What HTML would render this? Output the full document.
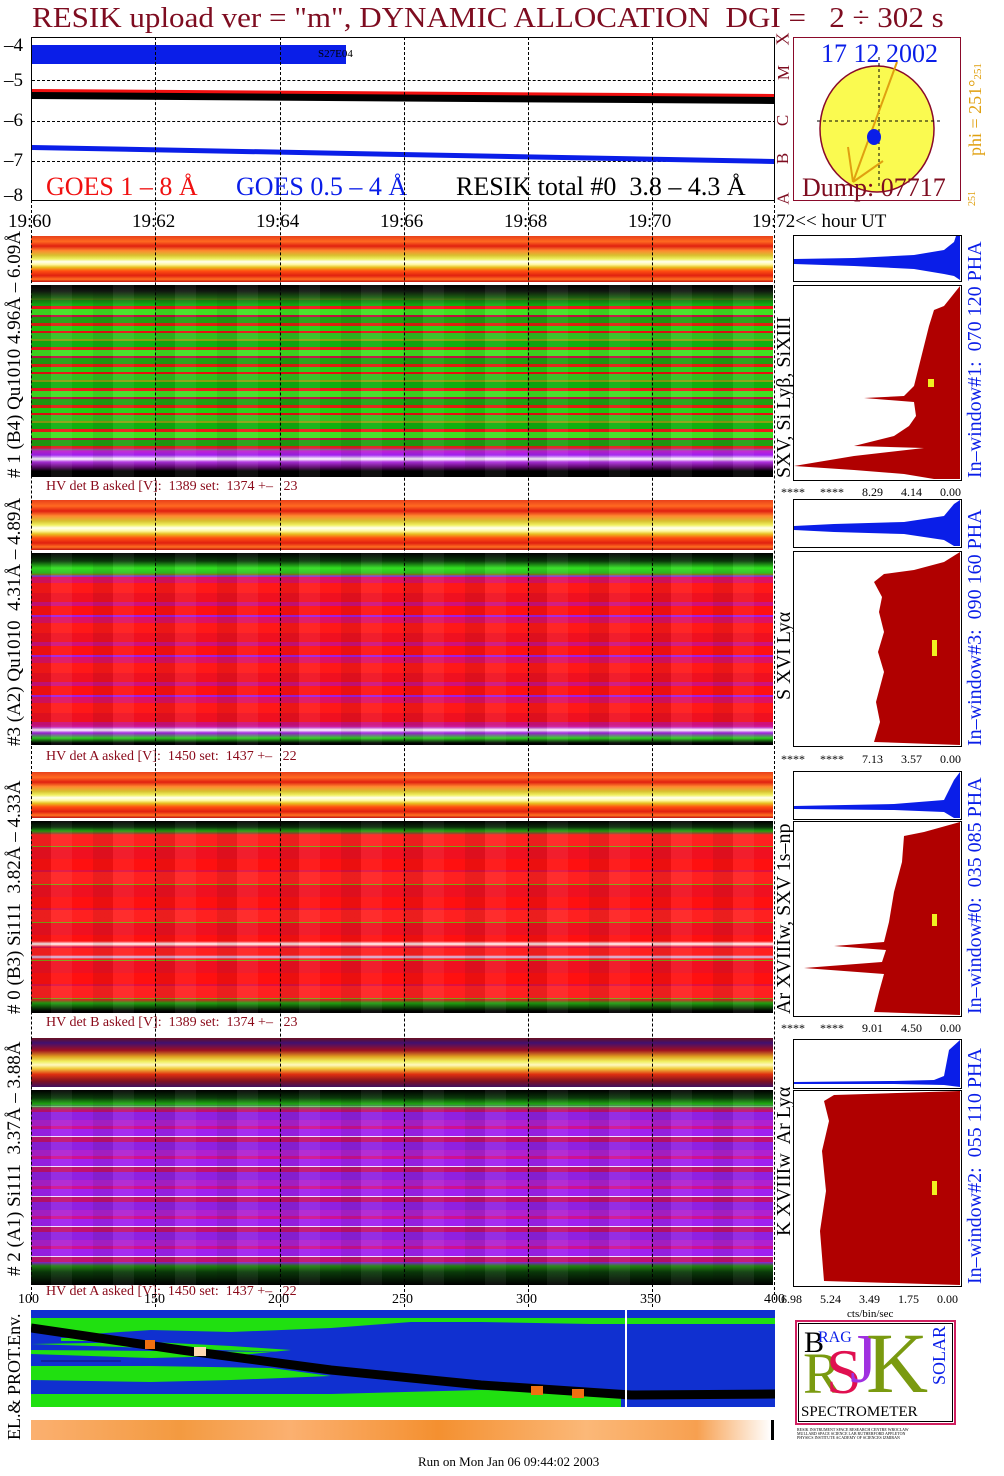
<!DOCTYPE html>
<html><head><meta charset="utf-8"><style>
body{margin:0;background:#fff;width:1004px;height:1476px;position:relative;overflow:hidden;font-family:"Liberation Serif",serif}
.a{position:absolute}
.t{position:absolute;white-space:nowrap;line-height:1}
.dash{position:absolute;width:0;border-left:1px dashed #000}
.strip{background:linear-gradient(180deg,#e8401a 0%,#ff6a20 12%,#e02010 22%,#ff8a30 32%,#d8c030 42%,#f0f060 50%,#fffff0 56%,#fff8a0 62%,#e8c020 68%,#ff5010 76%,#e02010 86%,#ff7020 94%,#c01010 100%)}
.cols{background-image:repeating-linear-gradient(90deg,rgba(0,0,0,.08) 0 20px,rgba(255,255,255,.06) 20px 41px,rgba(0,0,0,0) 41px 62px)}
.rot{position:absolute;white-space:nowrap;transform:rotate(-90deg);transform-origin:left top;line-height:1}
.hv{color:#8a0a1a;font-size:14px}
.box{position:absolute;border:1px solid #000;background:#fff}
.lab{font-size:12px}
</style></head><body>

<div class="t" style="left:32px;top:4px;font-size:29px;color:#7e0c20;transform:scaleX(1.07);transform-origin:left">RESIK upload ver = "m", DYNAMIC ALLOCATION&nbsp; DGI =&nbsp;&nbsp; 2 ÷ 302 s</div>

<!-- top plot -->
<div class="a" style="left:31px;top:37px;width:744px;height:164px;border:1px solid #000;box-sizing:border-box;overflow:hidden">
 <div class="a" style="left:0;top:7px;width:314px;height:19px;background:#0a1ee8"></div>
 <div class="t" style="left:286px;top:11px;font-size:11px">S27E04</div>
 <div class="a" style="left:0;top:42px;width:744px;height:0;border-top:1px dashed #000"></div>
 <div class="a" style="left:0;top:123px;width:744px;height:0;border-top:1px dashed #000"></div>
 <div class="a" style="left:0;top:83px;width:744px;height:0;border-top:1px dashed #000"></div>
 <svg class="a" style="left:0;top:0" width="744" height="164">
  <polygon points="0,51 744,56 744,60 0,55" fill="#f01010"/>
  <polygon points="0,54 744,59 744,66 0,61" fill="#000"/>
  <polygon points="0,107 744,121 744,126 0,112" fill="#0a1ee8"/>
 </svg>
 <div class="t" style="left:14px;top:136px;font-size:26px;color:#f01010">GOES 1 – 8 Å</div>
 <div class="t" style="left:204px;top:136px;font-size:26px;color:#0a1ee8">GOES 0.5 – 4 Å</div>
 <div class="t" style="left:424px;top:136px;font-size:26px;color:#000">RESIK total #0&nbsp; 3.8 – 4.3 Å</div>
</div>
<div class="t" style="left:4px;top:36px;font-size:19px">–4</div>
<div class="t" style="left:4px;top:71px;font-size:19px">–5</div>
<div class="t" style="left:4px;top:111px;font-size:19px">–6</div>
<div class="t" style="left:4px;top:151px;font-size:19px">–7</div>
<div class="t" style="left:4px;top:186px;font-size:19px">–8</div>
<div class="t" style="left:776px;top:30px;font-size:18px;color:#7e0c20;transform:rotate(-90deg)">X</div>
<div class="t" style="left:776px;top:64px;font-size:17px;color:#7e0c20;transform:rotate(-90deg)">M</div>
<div class="t" style="left:777px;top:112px;font-size:17px;color:#7e0c20;transform:rotate(-90deg)">C</div>
<div class="t" style="left:777px;top:150px;font-size:17px;color:#7e0c20;transform:rotate(-90deg)">B</div>
<div class="t" style="left:777px;top:190px;font-size:17px;color:#7e0c20;transform:rotate(-90deg)">A</div>

<!-- sun box -->
<div class="a" style="left:793px;top:37px;width:168px;height:164px;border:1px solid #8a0a2a;box-sizing:border-box"></div>
<svg class="a" style="left:793px;top:37px" width="168" height="164">
 <ellipse cx="84" cy="92" rx="57" ry="63" fill="#fafa50" stroke="#8a0a2a" stroke-width="1.5"/>
 <line x1="24" y1="84" x2="150" y2="84" stroke="#000" stroke-dasharray="3,3"/>
 <line x1="86" y1="20" x2="86" y2="150" stroke="#000" stroke-dasharray="3,3"/>
 <line x1="104" y1="25" x2="60" y2="145" stroke="#e0a010" stroke-width="2"/>
 <line x1="55" y1="110" x2="60" y2="145" stroke="#e0a010" stroke-width="2"/>
 <line x1="90" y1="124" x2="60" y2="145" stroke="#e0a010" stroke-width="2"/>
 <ellipse cx="81" cy="100" rx="7" ry="8" fill="#0a1ee8"/>
</svg>
<div class="t" style="left:821px;top:41px;font-size:26px;color:#0a1ee8">17 12 2002</div>
<div class="t" style="left:802px;top:175px;font-size:26px;color:#7e0c20">Dump: 07717</div>
<div class="rot" style="left:966px;top:156px;font-size:18px;color:#e0a010">phi = 251°<span style="font-size:11px">251</span></div>
<div class="rot" style="left:968px;top:206px;font-size:10px;color:#e0a010">251</div>

<!-- time labels -->
<div class="t" style="left:8px;top:212px;font-size:19px">19:60</div>
<div class="t" style="left:132px;top:212px;font-size:19px">19:62</div>
<div class="t" style="left:256px;top:212px;font-size:19px">19:64</div>
<div class="t" style="left:380px;top:212px;font-size:19px">19:66</div>
<div class="t" style="left:504px;top:212px;font-size:19px">19:68</div>
<div class="t" style="left:628px;top:212px;font-size:19px">19:70</div>
<div class="t" style="left:752px;top:212px;font-size:19px">19:72&lt;&lt; hour UT</div>

<!-- panel 1 -->
<div class="a strip" style="left:31px;top:236px;width:742px;height:46px"></div>
<div class="a" style="left:31px;top:285px;width:742px;height:192px;background:
 linear-gradient(180deg,#000 0,#101810 6px,#1a5a10 12px,rgba(0,0,0,0) 20px,rgba(0,0,0,0) 162px,#c020d0 166px,#a020f0 170px,#fff 174px,#b030e0 177px,#600870 182px,#000 186px),
 repeating-linear-gradient(180deg,#20d010 0 5px,#e81010 5px 7px,#30c020 7px 13px,#8aa010 13px 15px,#10b010 15px 21px,#f01818 21px 24px,#40e020 24px 30px,#c01040 30px 32px,#20a010 32px 38px,#e02010 38px 41px)"></div>
<div class="a cols" style="left:31px;top:285px;width:742px;height:192px"></div>
<div class="t hv" style="left:46px;top:480px">HV det B asked [V]:&nbsp; 1389 set:&nbsp; 1374 +–&nbsp;&nbsp; 23</div>
<div class="rot" style="left:5px;top:478px;font-size:19px">#&nbsp;1 (B4) Qu1010 4.96Å – 6.09Å</div>
<div class="rot" style="left:774px;top:478px;font-size:20px">SXV, Si Lyβ, SiXIII</div>
<div class="rot" style="left:965px;top:478px;font-size:20px;color:#0a1ee8">In–window#1:&nbsp; 070 120 PHA</div>
<div class="box" style="left:793px;top:235px;width:167px;height:45px"></div>
<svg class="a" style="left:794px;top:236px" width="166" height="44"><path d="M166,0 L162,0 L160,6 L150,14 L120,19 L60,22 L0,23 L0,28 L60,30 L120,33 L150,38 L160,40 L166,44 Z" fill="#0a1ee8"/></svg>
<div class="box" style="left:793px;top:285px;width:167px;height:194px"></div>
<svg class="a" style="left:794px;top:286px" width="166" height="193"><path d="M166,0 L158,10 L150,20 L140,24 L135,40 L130,60 L125,80 L120,100 L110,110 L70,112 L120,116 L122,130 L115,140 L100,150 L60,160 L130,162 L60,170 L0,180 L60,184 L110,188 L140,193 L166,193 Z" fill="#b00000"/><rect x="134" y="93" width="6" height="8" fill="#f0f020"/></svg>
<div class="t lab" style="left:781px;top:486px">****&nbsp;&nbsp;&nbsp;&nbsp; ****&nbsp;&nbsp;&nbsp;&nbsp;&nbsp; 8.29&nbsp;&nbsp;&nbsp;&nbsp;&nbsp; 4.14&nbsp;&nbsp;&nbsp;&nbsp;&nbsp; 0.00</div>

<!-- panel 2 -->
<div class="a strip" style="left:31px;top:500px;width:742px;height:50px"></div>
<div class="a" style="left:31px;top:553px;width:742px;height:192px;background:
 linear-gradient(180deg,#000 0,#0a3a0a 8px,#30e020 15px,#30c020 20px,rgba(0,0,0,0) 24px,rgba(0,0,0,0) 172px,#c020c0 174px,#fff 177px,#a020e0 180px,#30d020 185px,#000 190px),
 repeating-linear-gradient(180deg,#f01020 0 9px,#d0107a 9px 13px,#ff1010 13px 22px,#a020e0 22px 24px,#e01060 24px 30px,#ff1818 30px 40px)"></div>
<div class="a cols" style="left:31px;top:553px;width:742px;height:192px"></div>
<div class="t hv" style="left:46px;top:750px">HV det A asked [V]:&nbsp; 1450 set:&nbsp; 1437 +–&nbsp;&nbsp; 22</div>
<div class="rot" style="left:5px;top:746px;font-size:19px">#3 (A2) Qu1010&nbsp; 4.31Å – 4.89Å</div>
<div class="rot" style="left:774px;top:700px;font-size:20px">S XVI Lyα</div>
<div class="rot" style="left:965px;top:746px;font-size:20px;color:#0a1ee8">In–window#3:&nbsp; 090 160 PHA</div>
<div class="box" style="left:793px;top:499px;width:167px;height:47px"></div>
<svg class="a" style="left:794px;top:500px" width="166" height="46"><path d="M166,0 L160,4 L150,16 L110,22 L40,24 L0,26 L0,30 L40,32 L110,34 L150,40 L160,46 L166,46 Z" fill="#0a1ee8"/></svg>
<div class="box" style="left:793px;top:551px;width:167px;height:194px"></div>
<svg class="a" style="left:794px;top:552px" width="166" height="193"><path d="M166,0 L150,10 L120,18 L90,22 L80,30 L88,45 L85,60 L90,80 L84,100 L90,120 L82,150 L86,170 L80,190 L166,193 Z" fill="#b00000"/><rect x="138" y="88" width="5" height="16" fill="#f0f020"/></svg>
<div class="t lab" style="left:781px;top:753px">****&nbsp;&nbsp;&nbsp;&nbsp; ****&nbsp;&nbsp;&nbsp;&nbsp;&nbsp; 7.13&nbsp;&nbsp;&nbsp;&nbsp;&nbsp; 3.57&nbsp;&nbsp;&nbsp;&nbsp;&nbsp; 0.00</div>

<!-- panel 3 -->
<div class="a strip" style="left:31px;top:772px;width:742px;height:46px"></div>
<div class="a" style="left:31px;top:821px;width:742px;height:192px;background:
 linear-gradient(180deg,#000 0,#0a2a0a 6px,#20a010 10px,rgba(0,0,0,0) 14px,rgba(0,0,0,0) 120px,#fff 123px,rgba(0,0,0,0) 126px,rgba(0,0,0,0) 134px,#d0d0ff 136px,rgba(0,0,0,0) 138px,rgba(0,0,0,0) 178px,#20a010 182px,#000 190px),
 repeating-linear-gradient(180deg,#ff1010 0 11px,#e01040 11px 13px,#ff2020 13px 25px,#80a010 25px 26px,#f01020 26px 38px)"></div>
<div class="a cols" style="left:31px;top:821px;width:742px;height:192px"></div>
<div class="t hv" style="left:46px;top:1016px">HV det B asked [V]:&nbsp; 1389 set:&nbsp; 1374 +–&nbsp;&nbsp; 23</div>
<div class="rot" style="left:5px;top:1014px;font-size:19px"># 0 (B3) Si111&nbsp; 3.82Å – 4.33Å</div>
<div class="rot" style="left:774px;top:1014px;font-size:20px">Ar XVIIIw, SXV 1s–np</div>
<div class="rot" style="left:965px;top:1014px;font-size:20px;color:#0a1ee8">In–window#0:&nbsp; 035 085 PHA</div>
<div class="box" style="left:793px;top:771px;width:167px;height:47px"></div>
<svg class="a" style="left:794px;top:772px" width="166" height="46"><path d="M166,0 L160,8 L150,28 L100,32 L0,34 L0,37 L100,38 L150,40 L160,46 L166,46 Z" fill="#0a1ee8"/></svg>
<div class="box" style="left:793px;top:821px;width:167px;height:194px"></div>
<svg class="a" style="left:794px;top:822px" width="166" height="193"><path d="M166,0 L130,10 L110,14 L108,40 L100,70 L95,100 L90,120 L40,124 L92,128 L88,140 L10,146 L90,152 L85,170 L80,190 L166,193 Z" fill="#b00000"/><rect x="138" y="92" width="5" height="12" fill="#f0f020"/></svg>
<div class="t lab" style="left:781px;top:1022px">****&nbsp;&nbsp;&nbsp;&nbsp; ****&nbsp;&nbsp;&nbsp;&nbsp;&nbsp; 9.01&nbsp;&nbsp;&nbsp;&nbsp;&nbsp; 4.50&nbsp;&nbsp;&nbsp;&nbsp;&nbsp; 0.00</div>

<!-- panel 4 -->
<div class="a" style="left:31px;top:1038px;width:742px;height:49px;background:linear-gradient(180deg,#6a1020 0,#401070 10%,#a01020 25%,#e0a020 38%,#f0f060 48%,#fff8c0 55%,#f0d040 62%,#e03010 74%,#801020 88%,#401060 100%)"></div>
<div class="a" style="left:31px;top:1090px;width:742px;height:195px;background:
 linear-gradient(180deg,#000 0,#0a3a0a 8px,#20b010 14px,rgba(0,0,0,0) 20px,rgba(0,0,0,0) 172px,#208010 176px,#0a3a0a 182px,#000 195px),
 repeating-linear-gradient(180deg,#b020d0 0 6px,#d01090 6px 9px,#a020f0 9px 16px,#f0e0ff 16px 17px,#c01070 17px 22px,#9020e0 22px 30px)"></div>
<div class="a cols" style="left:31px;top:1090px;width:742px;height:195px"></div>
<div class="t hv" style="left:46px;top:1285px">HV det A asked [V]:&nbsp; 1450 set:&nbsp; 1437 +–&nbsp;&nbsp; 22</div>
<div class="rot" style="left:5px;top:1276px;font-size:19px"># 2 (A1) Si111&nbsp; 3.37Å – 3.88Å</div>
<div class="rot" style="left:774px;top:1236px;font-size:20px">K XVIIIw&nbsp; Ar Lyα</div>
<div class="rot" style="left:965px;top:1284px;font-size:20px;color:#0a1ee8">In–window#2:&nbsp; 055 110 PHA</div>
<div class="box" style="left:793px;top:1039px;width:167px;height:48px"></div>
<svg class="a" style="left:794px;top:1040px" width="166" height="47"><path d="M166,0 L155,10 L150,36 L140,40 L100,41 L0,42 L0,44 L100,44 L150,45 L166,47 Z" fill="#0a1ee8"/></svg>
<div class="box" style="left:793px;top:1090px;width:167px;height:195px"></div>
<svg class="a" style="left:794px;top:1091px" width="166" height="194"><path d="M166,0 L40,4 L30,10 L35,30 L28,60 L32,100 L26,140 L30,190 L166,194 Z" fill="#b00000"/><rect x="138" y="90" width="5" height="14" fill="#f0f020"/></svg>
<div class="t" style="left:781px;top:1293px;font-size:12px">6.98&nbsp;&nbsp;&nbsp;&nbsp;&nbsp; 5.24&nbsp;&nbsp;&nbsp;&nbsp;&nbsp; 3.49&nbsp;&nbsp;&nbsp;&nbsp;&nbsp; 1.75&nbsp;&nbsp;&nbsp;&nbsp;&nbsp; 0.00</div>
<div class="t" style="left:847px;top:1309px;font-size:11px">cts/bin/sec</div>

<!-- dashed lines -->
<div class="dash" style="left:155px;top:37px;height:1270px"></div>
<div class="dash" style="left:280px;top:37px;height:1270px"></div>
<div class="dash" style="left:404px;top:37px;height:1270px"></div>
<div class="dash" style="left:528px;top:37px;height:1270px"></div>
<div class="dash" style="left:652px;top:37px;height:1270px"></div>
<div class="dash" style="left:31px;top:200px;height:1100px"></div>
<div class="dash" style="left:774px;top:200px;height:1100px"></div>

<!-- x axis -->
<div class="t" style="left:18px;top:1293px;font-size:14px">100</div>
<div class="t" style="left:144px;top:1293px;font-size:14px">150</div>
<div class="t" style="left:268px;top:1293px;font-size:14px">200</div>
<div class="t" style="left:392px;top:1293px;font-size:14px">250</div>
<div class="t" style="left:516px;top:1293px;font-size:14px">300</div>
<div class="t" style="left:640px;top:1293px;font-size:14px">350</div>
<div class="t" style="left:764px;top:1293px;font-size:14px">400</div>

<!-- bottom panel -->
<svg class="a" style="left:31px;top:1310px" width="744" height="97">
 <rect width="744" height="97" fill="#1030d0"/>
 <path d="M0,8 L744,8 L744,14 L560,14 L450,12 L380,12 L300,18 L200,22 L120,20 L60,24 L0,22 Z" fill="#20e010"/>
 <path d="M0,34 L120,32 L200,36 L260,40 L200,46 L120,48 L0,44 Z" fill="#20e010"/>
 <path d="M0,56 L120,56 L240,58 L300,66 L200,70 L120,72 L0,70 Z" fill="#20e010"/>
 <path d="M0,34 L120,38 L260,42 L0,40 Z" fill="#1030d0"/>
 <path d="M0,84 L300,84 L450,80 L590,82 L590,97 L0,97 Z" fill="#20e010"/>
 <rect x="30" y="28" width="60" height="3" fill="#20e010"/>
 <rect x="10" y="50" width="80" height="2" fill="#1020a0"/>
 <polyline points="0,18 150,40 300,60 450,75 600,85 744,84" fill="none" stroke="#000" stroke-width="9"/>
 <rect x="114" y="30" width="10" height="9" fill="#f07010"/>
 <rect x="163" y="37" width="12" height="9" fill="#ffd8b0"/>
 <rect x="500" y="76" width="12" height="9" fill="#f07010"/>
 <rect x="541" y="79" width="12" height="9" fill="#f07010"/>
 <line x1="595" y1="0" x2="595" y2="97" stroke="#fff" stroke-width="2"/>
</svg>
<div class="a" style="left:31px;top:1420px;width:740px;height:20px;background:linear-gradient(90deg,#fbb070,#f39a40 20%,#fbb070 35%,#f49030 55%,#fbb878 75%,#f7a050 90%,#fff)"></div>
<div class="a" style="left:771px;top:1420px;width:3px;height:20px;background:#000"></div>
<div class="rot" style="left:5px;top:1440px;font-size:18px">EL.&amp; PROT.Env.</div>

<!-- logo -->
<div class="a" style="left:795px;top:1320px;width:161px;height:105px;border:2px solid #d02060;box-sizing:border-box;background:#fff"></div>
<div class="a" style="left:798px;top:1323px;width:155px;height:99px;border:1px solid #000;box-sizing:border-box"></div>
<div class="t" style="left:804px;top:1328px;font-size:30px">B</div>
<div class="t" style="left:818px;top:1330px;font-size:16px;color:#0a1ee8">RAG</div>
<div class="t" style="left:803px;top:1345px;font-size:58px;color:#7a9a10">R</div>
<div class="t" style="left:826px;top:1340px;font-size:64px;color:#e01050">S</div>
<div class="t" style="left:850px;top:1325px;font-size:70px;color:#a030e0">J</div>
<div class="t" style="left:866px;top:1320px;font-size:86px;color:#7a9a10">K</div>
<div class="rot" style="left:930px;top:1385px;font-size:18px;color:#0a1ee8">SOLAR</div>
<div class="t" style="left:801px;top:1405px;font-size:15px">SPECTROMETER</div>
<div class="t" style="left:797px;top:1428px;font-size:4px">RESIK INSTRUMENT SPACE RESEARCH CENTRE WROCLAW<br>MULLARD SPACE SCIENCE LAB RUTHERFORD APPLETON<br>PHYSICS INSTITUTE ACADEMY OF SCIENCES IZMIRAN</div>

<div class="t" style="left:418px;top:1455px;font-size:13px">Run on Mon Jan 06 09:44:02 2003</div>
</body></html>
